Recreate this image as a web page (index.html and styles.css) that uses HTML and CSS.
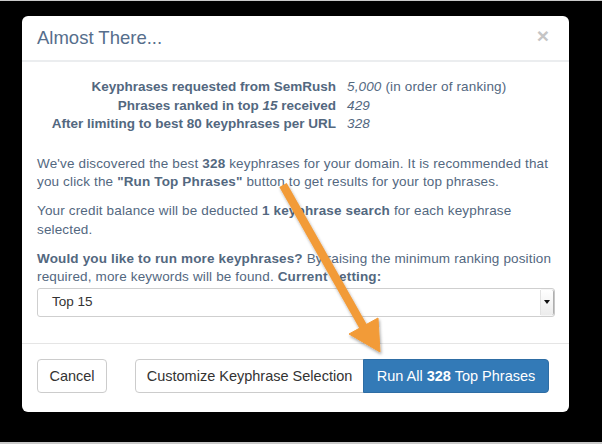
FILE: index.html
```html
<!DOCTYPE html>
<html>
<head>
<meta charset="utf-8">
<link rel="stylesheet" href="styles.css">
</head>
<body>
<div class="screen">
  <div class="modal">
    <div class="modal-header">
      <h4 class="modal-title">Almost There...</h4>
      <span class="close">×</span>
    </div>
    <div class="modal-body">
      <div class="stats">
        <div class="label">Keyphrases requested from SemRush</div>
        <div class="value"><i>5,000</i> (in order of ranking)</div>
        <div class="label">Phrases ranked in top <i>15</i> received</div>
        <div class="value"><i>429</i></div>
        <div class="label">After limiting to best 80 keyphrases per URL</div>
        <div class="value"><i>328</i></div>
      </div>
      <p>We've discovered the best <b>328</b> keyphrases for your domain. It is recommended that you click the <b>"Run Top Phrases"</b> button to get results for your top phrases.</p>
      <p>Your credit balance will be deducted <b>1 keyphrase search</b> for each keyphrase selected.</p>
      <p class="last"><b>Would you like to run more keyphrases?</b> By raising the minimum ranking position required, more keywords will be found. <b>Current setting:</b></p>
      <div class="select">
        <span class="select-text">Top 15</span>
        <span class="select-btn"><span class="caret"></span></span>
      </div>
    </div>
    <div class="modal-footer">
      <button class="btn btn-default btn-cancel">Cancel</button>
      <div class="btn-group">
        <button class="btn btn-default btn-left">Customize Keyphrase Selection</button>
        <button class="btn btn-primary btn-right">Run All <b>328</b> Top Phrases</button>
      </div>
    </div>
  </div>
  <svg class="arrow" width="602" height="444" viewBox="0 0 602 444">
    <defs>
      <filter id="sh" x="-20%" y="-20%" width="140%" height="140%">
        <feDropShadow dx="1" dy="2" stdDeviation="1.6" flood-color="#000" flood-opacity="0.35"/>
      </filter>
    </defs>
    <g filter="url(#sh)" fill="#f29b38" stroke="#f29b38">
      <line x1="283" y1="185" x2="364" y2="328" stroke-width="8.5" stroke-linecap="butt"/>
      <polygon points="349,334 378,318 380,352" stroke-width="1" stroke-linejoin="round"/>
    </g>
  </svg>
</div>
</body>
</html>
```

FILE: styles.css
```css
html, body {
  margin: 0;
  padding: 0;
  background: #000;
}

.screen {
  position: relative;
  width: 602px;
  height: 444px;
  box-sizing: border-box;
  border-top: 1px solid #c9c9c9;
  border-bottom: 2px solid #c9c9c9;
  padding: 15px 0 0 22px;
  overflow: hidden;
  font-family: "Liberation Sans", Arial, sans-serif;
}

.modal {
  width: 547px;
  background: #fff;
  border-radius: 6px;
  color: #53687f;
  font-size: 13.5px;
  line-height: 18.5px;
}

.modal-header {
  display: flex;
  justify-content: space-between;
  align-items: center;
  padding: 12px 20px 12px 15px;
  border-bottom: 2px solid #ebedef;
}

.modal-title {
  margin: 0;
  font-size: 18.5px;
  font-weight: normal;
  line-height: 20px;
  color: #566e8c;
}

.close {
  font-size: 21px;
  font-weight: bold;
  line-height: 20px;
  color: #c5c5c5;
  margin-top: -4px;
}

.modal-body {
  padding: 16px 14px 26px 15px;
}

.stats {
  display: grid;
  grid-template-columns: 299px auto;
  column-gap: 11px;
  margin-bottom: 21px;
}

.stats .label {
  text-align: right;
  font-weight: bold;
  white-space: nowrap;
}

.stats .value {
  white-space: nowrap;
  letter-spacing: 0.15px;
}

p {
  margin: 0 0 10.5px;
  letter-spacing: 0.15px;
}

p.last {
  margin-bottom: 1px;
}

b {
  font-weight: bold;
}

.select {
  display: flex;
  align-items: center;
  justify-content: space-between;
  height: 29px;
  box-sizing: border-box;
  border: 1px solid #cfcfcf;
  border-radius: 3px;
  color: #333;
}

.select-text {
  padding-left: 14px;
}

.select-btn {
  display: flex;
  align-items: center;
  justify-content: center;
  width: 12px;
  height: 25px;
  margin-right: 1px;
  background: linear-gradient(#ffffff, #ececec);
  border-left: 1px solid #e2e2e2;
  box-shadow: 1px 0 1px rgba(0, 0, 0, 0.35);
  border-radius: 0 2px 2px 0;
}

.caret {
  width: 0;
  height: 0;
  border-left: 3px solid transparent;
  border-right: 3px solid transparent;
  border-top: 4px solid #111;
}

.modal-footer {
  display: flex;
  justify-content: space-between;
  align-items: center;
  padding: 15px 20px 19px 15px;
  border-top: 1px solid #e5e5e5;
}

.btn {
  font-family: "Liberation Sans", Arial, sans-serif;
  font-size: 14.5px;
  line-height: 20px;
  height: 34px;
  box-sizing: border-box;
  padding: 6px 0;
  border: 1px solid #ccc;
  border-radius: 4px;
  background: #fff;
  color: #333;
  margin: 0;
  text-align: center;
  white-space: nowrap;
}

.btn-cancel {
  width: 70px;
}

.btn-group {
  display: flex;
}

.btn-left {
  border-radius: 4px 0 0 4px;
  width: 229px;
}

.btn-right {
  border-radius: 0 4px 4px 0;
  margin-left: -1px;
  width: 186px;
}

.btn-primary {
  background: #337ab7;
  border-color: #2e6da4;
  color: #fff;
}

.arrow {
  position: absolute;
  left: 0;
  top: -1px;
  pointer-events: none;
}
```
